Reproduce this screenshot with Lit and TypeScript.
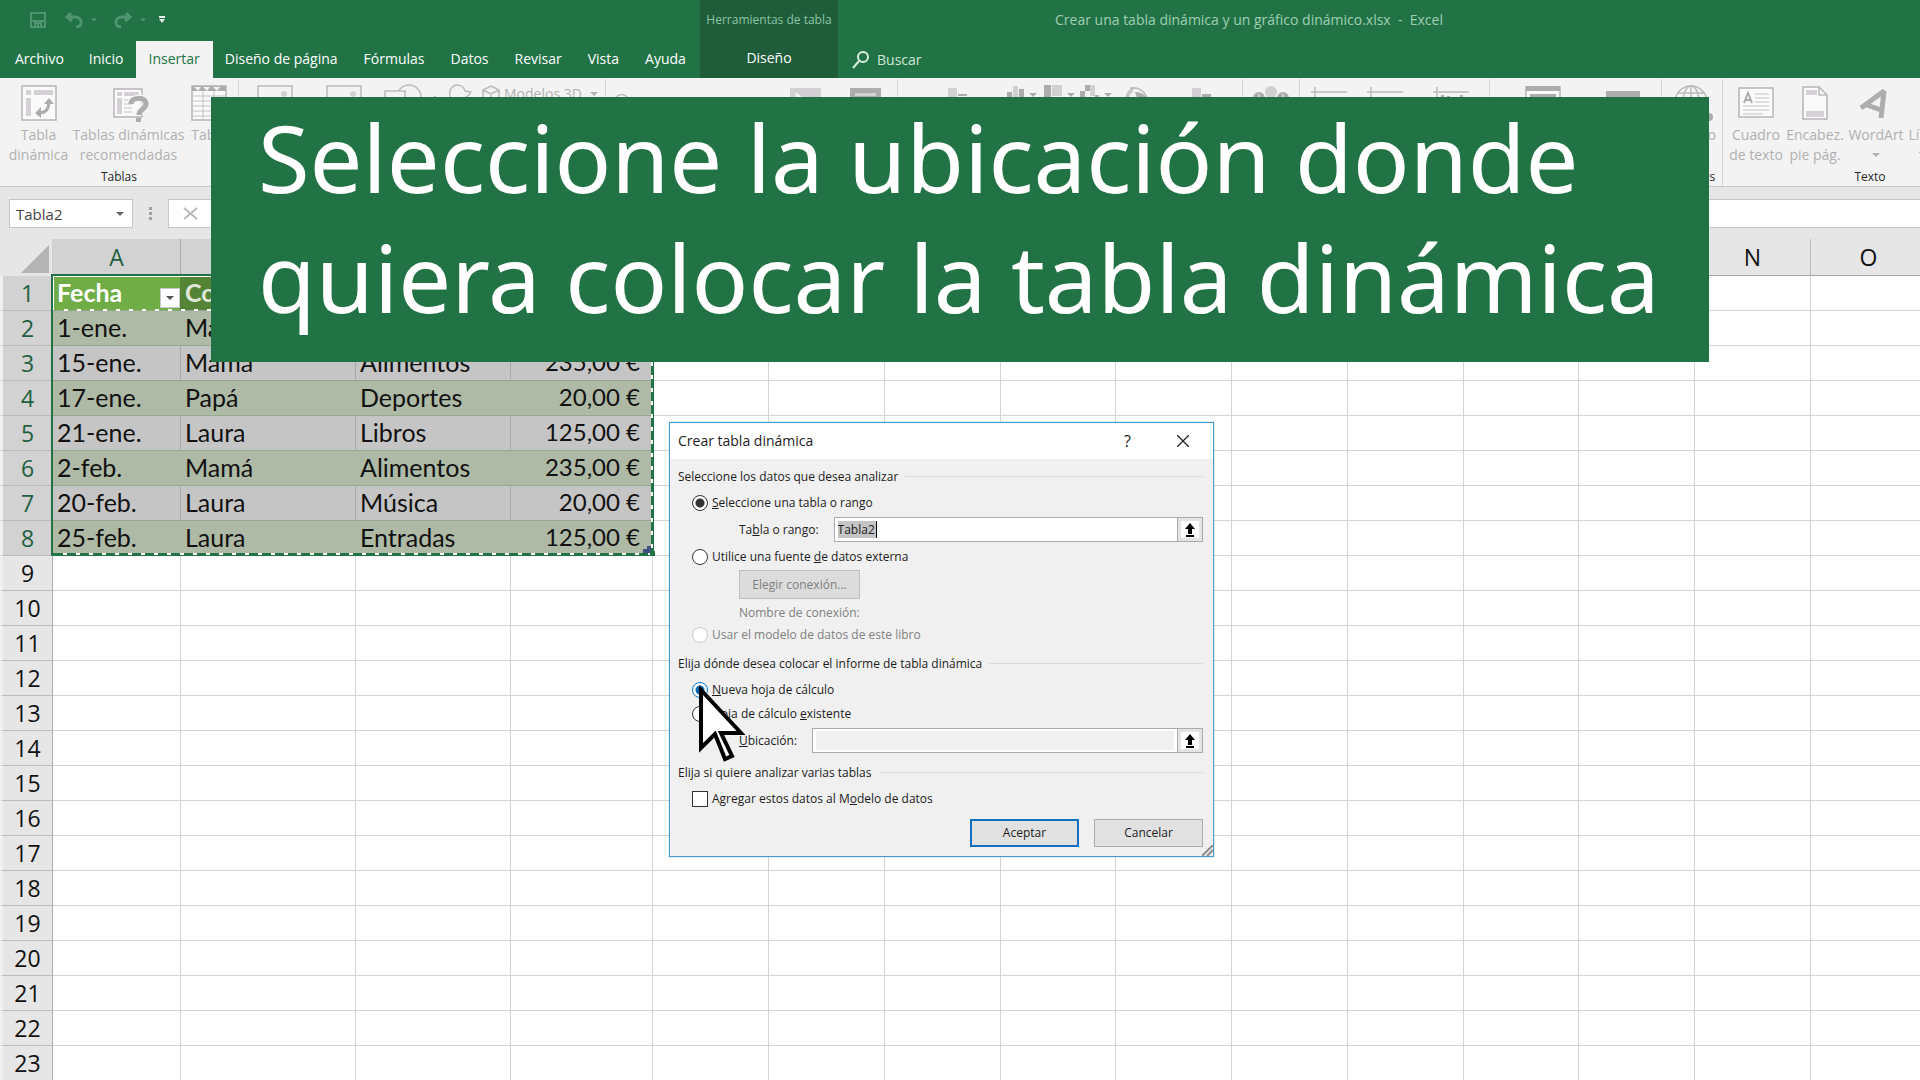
import { LitElement, html, css, svg, nothing } from "lit";
import { customElement } from "lit/decorators.js";
import { classMap } from "lit/directives/class-map.js";

const tri = svg`<path d="M0 0h8l-4 4z" />`;

const icons: Record<string, unknown> = {
  pivot: svg`<rect x="1" y="2" width="34" height="34" class="paper" />
    <rect x="5" y="6" width="5" height="5" class="soft" /><rect x="13" y="6" width="19" height="5" class="soft" />
    <rect x="5" y="14" width="5" height="18" class="soft" />
    <path d="M18 29c7 0 10-4 10-12" class="thick" /><path d="M23 20l5-6 5 6zM20 23l-6 6 6 5z" class="dark" />`,
  recommended: svg`<rect x="3" y="5" width="28" height="28" class="paper" />
    <rect x="6" y="8" width="5" height="4" class="soft" /><rect x="13" y="8" width="15" height="4" class="soft" />
    <rect x="6" y="14" width="5" height="16" class="soft" />
    <path d="M13 16h13M13 20h8M13 24h8M13 28h8" class="line" />
    <path d="M20 20c0-7 15-8 15 0 0 5-7 5-7 11" class="halo" />
    <path d="M20 20c0-7 15-8 15 0 0 5-7 5-7 11" class="query" /><rect x="25" y="34" width="5" height="4" class="dark" />`,
  table: svg`<rect x="1" y="2" width="34" height="34" class="paper" /><rect x="1" y="2" width="34" height="5" class="dark" />
    <path d="M3 3h7l-3 4zM12 3h7l-3 4zM22 3h7l-3 4z" class="light" />
    <path d="M1 12h34M1 17h34M1 22h34M1 27h34M1 32h34M12 7v29M23 7v29" class="line" />`,
  image: svg`<rect x="1" y="2" width="34" height="26" class="outline" /><circle cx="27" cy="10" r="3" class="soft" />`,
  shapes: svg`<circle cx="24" cy="13" r="12" class="outline" /><rect x="0" y="7" width="20" height="16" class="outlined-light" />`,
  bird: svg`<path d="M0 12l6 4M20 17c-7-5-5-15 3-16 5 0 7 3 8 6l6 1c-2 4-6 6-10 6" class="outline" />`,
  cube: svg`<path d="M9 1l8 4v9l-8 4-8-4V5zM1 5l8 4 8-4M9 9v9" class="outline" />`,
  arc: svg`<path d="M10 13c4-4 9-3 12 1" class="outline" />`,
  photo: svg`<rect x="2" y="4" width="31" height="22" class="mid" /><path d="M8 8l8 7-9 2z" class="light" />`,
  card: svg`<rect x="2" y="4" width="31" height="22" class="dark" /><rect x="7" y="9" width="21" height="3" class="soft" />`,
  chart: svg`<rect x="15" y="4" width="9" height="18" class="mid" /><rect x="25" y="10" width="9" height="2" class="dark" />`,
  columns: svg`<rect x="2" y="8" width="5" height="14" class="dark" /><rect x="8" y="2" width="5" height="20" class="mid" /><rect x="14" y="5" width="5" height="17" class="dark" />
    <g transform="translate(24 9)" class="dark">${tri}</g>`,
  treemap: svg`<rect x="2" y="1" width="7" height="20" class="dark" /><rect x="10" y="1" width="10" height="11" class="mid" /><rect x="10" y="13" width="10" height="8" class="dark" />
    <g transform="translate(25 9)" class="dark">${tri}</g>`,
  waterfall: svg`<rect x="1" y="7" width="5" height="8" class="dark" /><rect x="6" y="1" width="5" height="6" class="dark" /><rect x="11" y="1" width="5" height="11" class="mid" /><rect x="16" y="11" width="4" height="8" class="dark" />
    <g transform="translate(25 9)" class="dark">${tri}</g>`,
  globeChart: svg`<path d="M5 14c1-5 4-8 8-10M9 4c8-1 14 3 17 9M12 7c-3 2-5 5-6 9" class="outline" /><path d="M14 8c7 0 12 4 14 9H17z" class="dark" />`,
  pivotChart: svg`<rect x="8" y="4" width="9" height="18" class="mid" /><rect x="18" y="10" width="9" height="12" class="dark" />`,
  map: svg`<circle cx="6" cy="14" r="6" class="dark" /><circle cx="18" cy="8" r="6" class="mid" /><circle cx="30" cy="14" r="6" class="dark" /><path d="M6 10v6M30 10v6" class="white" />`,
  spark: svg`<path d="M0 8h36M4 3v12M14 14h3M24 14h4" class="outline" />`,
  sparkBars: svg`<path d="M0 8h36M4 3v12" class="outline" /><path d="M8 11h3v8h-3zM14 12h3v8h-3zM21 14h3v8h-3zM27 11h3v8h-3z" class="dark" />`,
  slicer: svg`<rect x="1" y="3" width="34" height="30" class="paper" /><rect x="1" y="2" width="34" height="5" class="dark" /><rect x="5" y="10" width="26" height="4" class="dark" />`,
  timeline: svg`<rect x="1" y="7" width="34" height="6" class="dark" />`,
  globe: svg`<circle cx="17" cy="18" r="16" class="outline" /><ellipse cx="17" cy="18" rx="8" ry="16" class="outline" /><path d="M3 9h28M17 2v32M1 18h32" class="outline" /><circle cx="35" cy="33" r="4" class="dark" />`,
  textbox: svg`<rect x="1" y="4" width="34" height="29" class="paper" />
    <path d="M6 19l4-10 4 10M7 16h6" class="letter" /><path d="M17 10h14M17 14h14M17 18h14M5 22h26M5 26h26M5 30h20" class="line" />`,
  header: svg`<path d="M6 3h16l8 8v24H6z" class="paper" /><path d="M22 3v8h8" class="outline" /><rect x="9" y="6" width="11" height="5" class="soft" /><rect x="9" y="27" width="18" height="6" class="soft" />`,
  wordart: svg`<path d="M3 24L26 7l-3 27M9 21l14 5" class="art" />`,
  signature: svg``,
};

type Tool = { icon?: string; name: string; lines?: string[]; side?: boolean; drop?: boolean };
type Group = { cls: string; caption: string; tools: Tool[] };

const groups: Group[] = [
  { cls: "g-tables", caption: "Tablas", tools: [
    { icon: "pivot", name: "Tabla dinámica", lines: ["Tabla", "dinámica"] },
    { icon: "recommended", name: "Tablas dinámicas recomendadas", lines: ["Tablas dinámicas", "recomendadas"] },
    { icon: "table", name: "Tabla", lines: ["Tabla"] },
  ] },
  { cls: "g-art", caption: "", tools: [
    { icon: "image", name: "Imágenes" }, { icon: "image", name: "Imágenes en línea" }, { icon: "shapes", name: "Formas" },
    { icon: "bird", name: "Iconos" }, { icon: "cube", name: "Modelos 3D", side: true },
  ] },
  { cls: "g-addins", caption: "", tools: [
    { icon: "arc", name: "Complementos" }, { icon: "photo", name: "Visio" }, { icon: "card", name: "Gráfico de personas" },
  ] },
  { cls: "g-charts", caption: "", tools: [
    { icon: "chart", name: "Gráficos recomendados" }, { icon: "columns", name: "Columnas" }, { icon: "treemap", name: "Jerarquía" },
    { icon: "waterfall", name: "Cascada" }, { icon: "globeChart", name: "Mapas" }, { icon: "pivotChart", name: "Gráfico dinámico" },
  ] },
  { cls: "g-tour", caption: "", tools: [{ icon: "map", name: "Mapa 3D" }] },
  { cls: "g-spark", caption: "", tools: [
    { icon: "spark", name: "Línea" }, { icon: "spark", name: "Columna" }, { icon: "sparkBars", name: "Pérdidas y ganancias" },
  ] },
  { cls: "g-filter", caption: "", tools: [{ icon: "slicer", name: "Segmentación" }, { icon: "timeline", name: "Escala de tiempo" }] },
  { cls: "g-links", caption: "Vínculos", tools: [{ icon: "globe", name: "Vínculo", lines: ["Vínculo"] }] },
  { cls: "g-text", caption: "Texto", tools: [
    { icon: "textbox", name: "Cuadro de texto", lines: ["Cuadro", "de texto"] },
    { icon: "header", name: "Encabezado y pie de página", lines: ["Encabez.", "pie pág."] },
    { icon: "wordart", name: "WordArt", lines: ["WordArt"], drop: true },
    { icon: "signature", name: "Línea de firma", lines: ["Línea de", "firma"] },
  ] },
];

@customElement("excel-ribbon")
class ExcelRibbon extends LitElement {
  static styles = css`
    :host { display: block; overflow: hidden; background: #f3f3f3; border-bottom: 1px solid #c8c8c8; font: 14px/20px "Open Sans", "Noto Sans", sans-serif; color: #b1b1b1; }
    .groups { display: flex; }
    .group { flex: none; display: flex; flex-direction: column; justify-content: space-between; height: 107px; border-right: 1px solid #d6d6d6; margin: 1px 0 0; box-sizing: border-box; padding-top: 5px; }
    .tools { display: grid; align-items: start; }
    .g-tables .tools { grid-template-columns: 77px 103px 58px; }
    .g-art .tools { grid-template-columns: 71px 68px 50px 48px 129px; }
    .g-addins .tools { grid-template-columns: 171px 57px 63px; }
    .g-addins .tool:first-child { justify-self: start; }
    .g-charts .tools { grid-template-columns: 106px 37px 37px 37px 47px 80px; }
    .g-tour .tools { grid-template-columns: 56px; }
    .g-spark .tools { grid-template-columns: 58px 54px 77px; }
    .g-filter .tools { grid-template-columns: 106px 54px 11px; }
    .g-links .tools { grid-template-columns: 60px; }
    .g-text .tools { grid-template-columns: 66px 52px 70px 50px 56px; }
    .tool { display: flex; flex-direction: column; align-items: center; border: 0; padding: 0; background: none; font: inherit; color: inherit; white-space: nowrap; min-width: 0; }
    .tool svg { width: 36px; height: 38px; flex: none; margin-bottom: 3px; overflow: visible; }
    .tool.side { flex-direction: row; gap: 4px; padding-left: 6px; }
    .tool.side svg { width: 18px; height: 18px; margin: 0; }
    .caret { fill: #b1b1b1; }
    .tool svg.caret { width: 8px; height: 4px; margin: 8px 0 0; }
    .tool.side svg.caret { width: 8px; height: 4px; margin: 0 0 0 4px; }
    .caption { text-align: center; font-size: 12px; line-height: 16px; color: #262626; min-height: 16px; padding-bottom: 1px; }
    .paper { fill: #fafafa; stroke: #b8b4b8; stroke-width: 1.5; }
    .outline { fill: none; stroke: #bdb9bd; stroke-width: 1.5; }
    .outlined-light { fill: #f3f3f3; stroke: #bdb9bd; stroke-width: 1.5; }
    .soft { fill: #d5d0d5; } .mid { fill: #d2d0d2; } .dark { fill: #adadad; } .light { fill: #f3f3f3; }
    .line { fill: none; stroke: #c4c0c4; }
    .white { stroke: #f3f3f3; }
    .thick { fill: none; stroke: #adadad; stroke-width: 3; }
    .halo { fill: none; stroke: #f3f3f3; stroke-width: 8; }
    .query { fill: none; stroke: #adadad; stroke-width: 5; }
    .letter { fill: none; stroke: #adadad; stroke-width: 2; }
    .art { fill: none; stroke: #adadad; stroke-width: 5; stroke-linejoin: bevel; }
  `;
  caret() { return html`<svg class="caret" viewBox="0 0 8 4">${tri}</svg>`; }
  render() {
    return html`<div class="groups">${groups.map((g) => html`
      <section class="group ${g.cls}">
        <div class="tools">${g.tools.map((t) => html`
          <button class=${classMap({ tool: true, side: !!t.side })} aria-label=${t.name} aria-disabled="true">
            <svg viewBox=${t.side ? "0 0 18 18" : "0 0 36 38"}>${t.icon ? icons[t.icon] : nothing}</svg>
            ${t.side ? html`<span>${t.name}</span>${this.caret()}` : nothing}
            ${(t.lines ?? []).map((l) => html`<span>${l}</span>`)}
            ${t.drop ? this.caret() : nothing}
          </button>`)}
        </div>
        <div class="caption">${g.caption}</div>
      </section>`)}</div>`;
  }
}

@customElement("excel-titlebar")
class ExcelTitlebar extends LitElement {
  static styles = css`
    :host { display: grid; grid-template: 41px 37px / minmax(700px, auto) 138px 1fr; background: #217346; color: #fff; font: 14px/20px "Open Sans", "Noto Sans", sans-serif; }
    button, a { font: inherit; color: inherit; background: none; border: 0; padding: 0; text-decoration: none; white-space: nowrap; }
    .quick { display: flex; align-items: center; padding-left: 30px; padding-bottom: 2px; gap: 17px; }
    .quick svg { display: block; fill: none; stroke: #4f9470; stroke-width: 2; }
    .quick .solid { fill: #4f9470; stroke: none; }
    .quick .bright { fill: #e8f2ec; stroke: none; }
    .quick button { display: flex; align-items: center; gap: 8px; }
    .quick button:first-child { margin-right: 2px; }
    .quick button:last-child { margin-left: -4px; }
    .tabs { display: flex; grid-row: 2; padding-left: 2px; }
    .tab { display: flex; align-items: center; padding: 0 13px 2px; }
    .tab:nth-child(-n + 2) { padding-right: 12px; }
    .tab:nth-child(4) { padding-left: 12px; }
    .tab.active { background: #f3f3f3; color: #217346; }
    .context { grid-area: 1 / 2 / 3 / 3; background: #1e5c3a; display: grid; grid-template-rows: 39px 38px; justify-items: center; align-items: center; align-content: start; }
    .hint { font-size: 12px; color: #8fc3a5; white-space: nowrap; }
    .doc { grid-area: 1 / 3; align-self: center; padding: 0 0 2px 217px; color: #a0cdb3; white-space: nowrap; }
    .search { grid-area: 2 / 3; display: flex; align-items: center; gap: 8px; padding-left: 14px; color: #cfe5d8; justify-self: start; }
    .search svg { fill: none; stroke: #d8eee0; stroke-width: 2; }
  `;
  render() {
    const tabs = ["Archivo", "Inicio", "Insertar", "Diseño de página", "Fórmulas", "Datos", "Revisar", "Vista", "Ayuda"];
    return html`
      <div class="quick">
        <button aria-label="Guardar"><svg width="16" height="16" viewBox="0 0 16 16"><path d="M1 1h14v14H1zM1 9h14M5 15v-4h6v4M8 12v3" /></svg></button>
        <button aria-label="Deshacer"><svg width="18" height="16" viewBox="0 0 18 16"><path d="M6 1L2 5l5 4M2 5h8c8 0 8 10 1 10" stroke-width="3" /></svg><svg width="6" height="4" viewBox="0 0 8 4"><g class="solid">${tri}</g></svg></button>
        <button aria-label="Rehacer"><svg width="18" height="16" viewBox="0 0 18 16"><path d="M12 1l4 4-5 4M16 5H8C0 5 0 15 7 15" stroke-width="3" /></svg><svg width="6" height="4" viewBox="0 0 8 4"><g class="solid">${tri}</g></svg></button>
        <button aria-label="Personalizar barra"><svg width="6" height="7" viewBox="0 0 6 7"><path class="bright" d="M0 0h6v2H0zM0 3h6L3 7z" /></svg></button>
      </div>
      <nav class="tabs">${tabs.map((t) => html`<a href="#" class=${classMap({ tab: true, active: t === "Insertar" })}>${t}</a>`)}</nav>
      <div class="context"><span class="hint">Herramientas de tabla</span><a href="#">Diseño</a></div>
      <div class="doc">Crear una tabla dinámica y un gráfico dinámico.xlsx&nbsp; -&nbsp; Excel</div>
      <button class="search"><svg width="17" height="18" viewBox="0 0 17 18"><circle cx="11" cy="6" r="5" /><path d="M7 10l-6 7" /></svg>Buscar</button>`;
  }
}

const records = [
  ["1-ene.", "Mamá", "", ""],
  ["15-ene.", "Mamá", "Alimentos", "235,00 €"],
  ["17-ene.", "Papá", "Deportes", "20,00 €"],
  ["21-ene.", "Laura", "Libros", "125,00 €"],
  ["2-feb.", "Mamá", "Alimentos", "235,00 €"],
  ["20-feb.", "Laura", "Música", "20,00 €"],
  ["25-feb.", "Laura", "Entradas", "125,00 €"],
];
const heads = ["Fecha", "Co", "", ""];
const letters = "ABCDEFGHIJKLMNO".split("");
const labelled = new Set(["A", "N", "O"]);

@customElement("excel-sheet")
class ExcelSheet extends LitElement {
  static styles = css`
    :host { display: block; position: relative; background: #fff; font: 25px/32px Lato, "Open Sans", sans-serif; color: #111; }
    table { table-layout: fixed; border-collapse: separate; border-spacing: 0; width: 1927px; }
    .c-row { width: 53px; } .c-a { width: 128px; } .c-b { width: 175px; } .c-c { width: 155px; } .c-d { width: 142px; }
    .c-x { width: 116px; } .c-y { width: 115px; }
    th, td { box-sizing: border-box; height: 35px; padding: 0; border-right: 1px solid #d4d4d4; border-bottom: 1px solid #d4d4d4; white-space: nowrap; overflow: hidden; }
    thead th { height: 37px; background: #e6e6e6; border-right-color: #bdbdbd; border-bottom-color: #a6a6a6; }
    .index { font: 23px/34px "Open Sans", "Noto Sans", sans-serif; font-weight: 400; background: #e6e6e6; border-left: 3px solid #f0f0f0; border-bottom-color: #bcbcbc; border-right-color: #b0b0b0; }
    thead .letter { font: 23px/34px "Open Sans", "Noto Sans", sans-serif; }
    thead .letter.picked, .index.picked { background: #d2d2d2; color: #1f6040; border-right-color: #ababab; }
    .corner { border-left: 0; border-right-color: #cfcfcf; border-bottom-color: #e6e6e6; }
    .corner svg { display: block; margin: 3px 3px 0 auto; }
    .rec { background: #c6c5c6; padding: 0 0 2px 4px; border-color: #a9a9a9; border-bottom-color: #93a88c; }
    .rec.even { background: #aeb9a6; border-right-color: #aeb9a6; border-bottom-color: #93a88c; }
    .rec.money { text-align: right; padding-right: 12px; font-size: 24px; }
    .rec.head { background: #558436; color: #dfe8d9; font-weight: 700; border-right-color: #558436; }
    .rec.head.first { background: #70ad47; color: #fff; padding: 0; border-right-color: #558436; }
    .title { display: flex; justify-content: space-between; align-items: flex-end; padding: 0 0 2px 4px; height: 32px; }
    .filter { width: 20px; height: 20px; padding: 0; border: 1px solid #c9c9d6; background: #fff; display: flex; align-items: center; justify-content: center; fill: #555; }
    .selection { position: absolute; left: 51px; top: 35px; width: 603px; height: 282px; box-sizing: border-box; border: 2px solid #217346; border-right-width: 3px; border-bottom-width: 3px; }
    .ants { position: absolute; left: 51px; top: 35px; width: 603px; height: 282px; overflow: visible; fill: none; }
    .ants .dash { stroke: #fff; stroke-width: 2; stroke-dasharray: 4 9; }
    .ants .inner { stroke: #fff; }
  `;
  render() {
    return html`
      <table>
        <colgroup>
          <col class="c-row" /><col class="c-a" /><col class="c-b" /><col class="c-c" /><col class="c-d" />
          ${letters.slice(4).map((l) => html`<col class=${l === "H" || l === "L" ? "c-y" : "c-x"} />`)}
        </colgroup>
        <thead><tr>
          <th class="index corner" aria-label="Seleccionar todo"><svg width="28" height="28" viewBox="0 0 28 28"><path d="M28 0v28H0z" fill="#b4b4b4" /></svg></th>
          ${letters.map((l, i) => html`<th scope="col" aria-label=${l} class=${classMap({ letter: true, picked: i < 4 })}>${labelled.has(l) ? l : nothing}</th>`)}
        </tr></thead>
        <tbody>${Array.from({ length: 23 }, (_, r) => html`<tr>
          <th scope="row" class=${classMap({ index: true, picked: r < 8 })}>${r + 1}</th>
          ${letters.map((_l, c) => {
            if (r > 7 || c > 3) return html`<td></td>`;
            if (r === 0) return html`<td class=${classMap({ rec: true, head: true, first: c === 0 })}>${c === 0
              ? html`<div class="title"><span>${heads[0]}</span><button class="filter" aria-label="Filtrar Fecha"><svg width="8" height="4" viewBox="0 0 8 4">${tri}</svg></button></div>`
              : heads[c]}</td>`;
            return html`<td class=${classMap({ rec: true, even: r % 2 === 1, money: c === 3 })}>${records[r - 1][c]}</td>`;
          })}
        </tr>`)}</tbody>
      </table>
      <div class="selection"></div>
      <svg class="ants" viewBox="51 35 603 282">
        <path class="inner" d="M53.5 71V37.5H653" /><path class="dash" d="M64 71H652M63 315H650M652 71V313" />
        <path d="M647 307h4v7h-8v-4h4z" fill="#3d4f7c" /><path d="M650 312h5v5h-5z" fill="#217346" />
      </svg>`;
  }
}

@customElement("pivot-dialog")
class PivotDialog extends LitElement {
  static styles = css`
    :host { display: flex; flex-direction: column; box-sizing: border-box; border: 1px solid #4a9ad4; background: #f0f0f0; font: 12px/16px "Open Sans", "Noto Sans", sans-serif; color: #1c1c1c; box-shadow: 0 0 1px #4a9ad4; }
    button, input { font: inherit; color: inherit; margin: 0; box-sizing: border-box; }
    .bar { display: flex; align-items: center; height: 36px; box-sizing: border-box; background: #fff; padding: 0 24px 1px 8px; font-size: 14px; }
    .bar h2 { font: inherit; margin: 0; flex: 1; }
    .bar button { border: 0; background: none; padding: 0; display: flex; }
    .bar .help { margin-right: 46px; font-size: 16px; }
    .body { padding: 9px 10px 9px 8px; display: flex; flex-direction: column; position: relative; }
    fieldset { border: 0; margin: 0; padding: 0; min-width: 0; display: flex; flex-direction: column; }
    .legend { display: flex; align-items: center; gap: 7px; height: 17px; white-space: nowrap; }
    .legend::after { content: ""; flex: 1; border-top: 1px solid #dadada; }
    .opt { display: flex; align-items: center; gap: 4px; padding-left: 14px; height: 24px; }
    .opt input { appearance: none; width: 16px; height: 16px; border: 1px solid #333; background: #fff; flex: none; }
    .opt input[type="radio"] { border-radius: 50%; }
    .opt input[type="radio"]:checked { background: radial-gradient(circle, #333 0 4px, #fff 5px); }
    .opt.blue input[type="radio"]:checked { border-color: #0078d7; background: radial-gradient(circle, #0067b8 0 4px, #fff 5px); }
    .opt.off { color: #808080; } .opt.off input { border-color: #ccc; }
    .first { margin-top: 6px; }
    .field { display: flex; align-items: center; padding-left: 61px; height: 25px; margin: 2px 0 3px; }
    .field label { flex: none; margin-right: 15px; }
    .field .text { flex: 1; min-width: 0; height: 25px; box-sizing: border-box; border: 1px solid #ababab; border-right: 0; background: #fff; padding: 0 3px; display: flex; align-items: center; }
    .text input { border: 0; outline: 0; padding: 0; background: none; height: 17px; }
    .text .value { width: 39px; background: #c5c5c5; border-right: 1px solid #000; }
    .text .blank { width: 100%; height: 19px; background: #f0f0f0; }
    .pick { width: 26px; height: 25px; padding: 0; border: 1px solid #ababab; background: #fff; box-shadow: inset 0 0 0 3px #e4e4e4; display: flex; align-items: center; justify-content: center; }
    .choose { align-self: flex-start; margin: 1px 0 0 61px; width: 121px; height: 29px; border: 1px solid #bfbfbf; background: #dcdcdc; color: #808080; padding: 0; }
    .conn { margin: 6px 0 0 61px; color: #808080; height: 18px; }
    .sec { margin-top: 8px; }
    .actions { display: flex; justify-content: flex-end; gap: 15px; margin-top: 8px; }
    .actions button { width: 109px; height: 28px; border: 1px solid #adadad; background: #e1e1e1; padding: 0; }
    .actions .ok { border: 2px solid #0f6fc0; }
    .grip { position: absolute; right: 0; bottom: 0; stroke: #8c8c8c; }
  `;
  pick(label: string) {
    return html`<button class="pick" aria-label=${label}><svg width="12" height="14" viewBox="0 0 12 14"><path d="M6 0l5 6H8v5H4V6H1zM2 12h8v2H2z" /></svg></button>`;
  }
  render() {
    return html`
      <header class="bar"><h2>Crear tabla dinámica</h2><button class="help" aria-label="Ayuda">?</button>
        <button aria-label="Cerrar"><svg width="12" height="12" viewBox="0 0 12 12" fill="none" stroke="#222" stroke-width="1.3"><path d="M0 0l12 12M12 0L0 12" /></svg></button></header>
      <div class="body">
        <fieldset aria-labelledby="l1"><div class="legend" id="l1">Seleccione los datos que desea analizar</div>
          <div class="opt first"><input type="radio" name="src" id="s1" checked /><label for="s1"><u>S</u>eleccione una tabla o rango</label></div>
          <div class="field"><label for="range">Ta<u>b</u>la o rango:</label><div class="text"><input class="value" id="range" value="Tabla2" /></div>${this.pick("Contraer rango")}</div>
          <div class="opt"><input type="radio" name="src" id="s2" /><label for="s2">Utilice una fuente <u>d</u>e datos externa</label></div>
          <button class="choose" disabled>Elegir conexión...</button>
          <div class="conn">Nombre de conexión:</div>
          <div class="opt off"><input type="radio" name="src" id="s3" disabled /><label for="s3">Usar el modelo de datos de este libro</label></div>
        </fieldset>
        <fieldset class="sec" aria-labelledby="l2"><div class="legend" id="l2">Elija dónde desea colocar el informe de tabla dinámica</div>
          <div class="opt blue first"><input type="radio" name="dst" id="d1" checked /><label for="d1"><u>N</u>ueva hoja de cálculo</label></div>
          <div class="opt"><input type="radio" name="dst" id="d2" /><label for="d2">Hoja de cálculo <u>e</u>xistente</label></div>
          <div class="field"><label for="loc"><u>U</u>bicación:</label><div class="text"><input class="blank" id="loc" disabled /></div>${this.pick("Contraer ubicación")}</div>
        </fieldset>
        <fieldset class="sec" aria-labelledby="l3"><div class="legend" id="l3">Elija si quiere analizar varias tablas</div>
          <div class="opt first"><input type="checkbox" id="m" /><label for="m">Agregar estos datos al M<u>o</u>delo de datos</label></div>
        </fieldset>
        <div class="actions"><button class="ok">Aceptar</button><button>Cancelar</button></div>
        <svg class="grip" width="11" height="11" viewBox="0 0 11 11" stroke-width="2"><path d="M0 11L11 0M5 11l6-6" /></svg>
      </div>`;
  }
}

@customElement("app-root")
class AppRoot extends LitElement {
  static styles = css`
    :host { display: block; position: relative; height: 100vh; overflow: hidden; background: #e6e6e6; }
    .formula { display: flex; align-items: stretch; height: 29px; padding: 12px 0 11px 9px; }
    .name { width: 124px; box-sizing: border-box; border: 1px solid #c6c6c6; background: #fff; display: flex; align-items: center; padding: 0 8px 0 6px; }
    .name input { flex: 1; min-width: 0; border: 0; padding: 0; background: none; outline: 0; font: 15px/20px "Open Sans", "Noto Sans", sans-serif; color: #444; }
    .dots { width: 35px; display: flex; align-items: center; justify-content: center; fill: #a0a0a0; }
    .entry { flex: 1; border: 1px solid #c6c6c6; border-right: 0; background: #fff; display: flex; align-items: center; padding-left: 14px; }
    .entry button { border: 0; background: none; padding: 0; display: flex; stroke: #b9b9b9; stroke-width: 2; }
    .banner { position: absolute; left: 211px; top: 97px; width: 1498px; height: 265px; box-sizing: border-box; background: #217346; color: #fff; margin: 0; padding: 0 0 0 47px; font: 94px/120px "Noto Sans", "Open Sans", sans-serif; white-space: nowrap; }
    .dialog { position: absolute; left: 669px; top: 422px; width: 545px; }
    .pointer { position: absolute; left: 696px; top: 682px; }
  `;
  render() {
    return html`
      <excel-titlebar></excel-titlebar>
      <excel-ribbon></excel-ribbon>
      <div class="formula">
        <div class="name"><input aria-label="Cuadro de nombres" value="Tabla2" /><svg width="8" height="4" viewBox="0 0 8 4" fill="#666">${tri}</svg></div>
        <div class="dots"><svg width="3" height="13" viewBox="0 0 3 13"><path d="M0 0h3v3H0zM0 5h3v3H0zM0 10h3v3H0z" /></svg></div>
        <div class="entry"><button aria-label="Cancelar"><svg width="15" height="13" viewBox="0 0 15 13"><path d="M1 1l13 11M14 1L1 12" /></svg></button></div>
      </div>
      <excel-sheet></excel-sheet>
      <pivot-dialog class="dialog" role="dialog" aria-label="Crear tabla dinámica"></pivot-dialog>
      <h1 class="banner">Seleccione la ubicación donde<br />quiera colocar la tabla dinámica</h1>
      <svg class="pointer" width="54" height="82" viewBox="0 0 54 82"><path d="M5 8v58l14-14 10 25 7-3-11-23h20z" fill="#fff" stroke="#000" stroke-width="4" /></svg>`;
  }
}
